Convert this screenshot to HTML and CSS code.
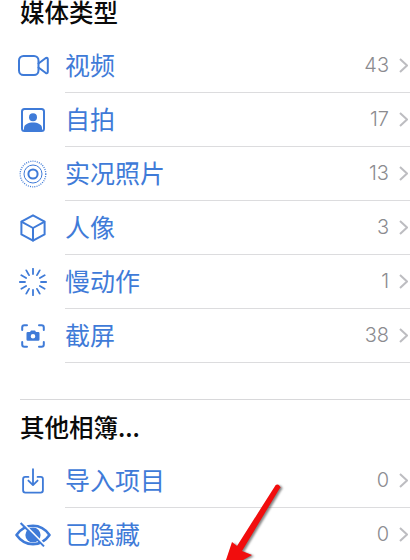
FILE: index.html
```html
<!DOCTYPE html>
<html lang="zh-CN">
<head>
<meta charset="utf-8">
<title>相簿</title>
<link rel="stylesheet" href="styles.css">
</head>
<body>
<main class="page">
  <h2 class="title first">媒体类型</h2>
  <ul class="list">
    <li class="row"><span class="icon"><svg viewBox="0 0 31 21" width="31" height="21"><rect x="1" y="1" width="19.5" height="19" rx="4.5" class="s"/><path d="M20.5 8.5 27.5 3.2Q29.8 2 29.8 4.2V16.8Q29.8 19 27.5 17.8L20.5 12.5" class="s"/></svg></span><span class="body"><span class="name">视频</span><span class="num">43</span><svg class="chev" viewBox="0 0 9 15" width="9" height="15"><path d="M1 1 8 7.5 1 14"/></svg></span></li>
    <li class="row"><span class="icon"><svg viewBox="0 0 24 24" width="24" height="24"><rect x="1" y="1" width="22" height="22" rx="2.5" class="s"/><circle cx="12" cy="9.2" r="4" class="f"/><path d="M3 22V20C3 16.5 7.5 14.6 12 14.6S21 16.5 21 20V22Z" class="f"/></svg></span><span class="body"><span class="name">自拍</span><span class="num">17</span><svg class="chev" viewBox="0 0 9 15" width="9" height="15"><path d="M1 1 8 7.5 1 14"/></svg></span></li>
    <li class="row"><span class="icon"><svg viewBox="0 0 28 28" width="28" height="28"><circle cx="14" cy="14" r="12.8" class="d"/><circle cx="14" cy="14" r="9" class="thin"/><circle cx="14" cy="14" r="4.6" class="s"/></svg></span><span class="body"><span class="name">实况照片</span><span class="num">13</span><svg class="chev" viewBox="0 0 9 15" width="9" height="15"><path d="M1 1 8 7.5 1 14"/></svg></span></li>
    <li class="row"><span class="icon"><svg viewBox="0 0 26 28" width="26" height="28"><path d="M13 1.3 24.6 7.6V20.4L13 26.7 1.4 20.4V7.6Z" class="s"/><path d="M1.8 7.8 13 14 24.2 7.8M13 14V26.4" class="s"/></svg></span><span class="body"><span class="name">人像</span><span class="num">3</span><svg class="chev" viewBox="0 0 9 15" width="9" height="15"><path d="M1 1 8 7.5 1 14"/></svg></span></li>
    <li class="row"><span class="icon"><svg viewBox="0 0 28 28" width="28" height="28"><path class="t" d="M14 .8V6M14 22V27.2M.8 14H6M22 14H27.2M18 7.1 20.7 2.4M7.3 25.6 10 20.9M10 7.1 7.3 2.4M20.7 25.6 18 20.9M7.1 10 2.4 7.3M25.6 20.7 20.9 18M7.1 18 2.4 20.7M25.6 7.3 20.9 10"/></svg></span><span class="body"><span class="name">慢动作</span><span class="num">1</span><svg class="chev" viewBox="0 0 9 15" width="9" height="15"><path d="M1 1 8 7.5 1 14"/></svg></span></li>
    <li class="row"><span class="icon"><svg viewBox="0 0 24 24" width="24" height="24"><path class="s" d="M6 1.2H3.4Q1.2 1.2 1.2 3.4V6M18 1.2H20.6Q22.8 1.2 22.8 3.4V6M6 22.8H3.4Q1.2 22.8 1.2 20.6V18M18 22.8H20.6Q22.8 22.8 22.8 20.6V18"/><path class="f" fill-rule="evenodd" d="M6.7 8H9L10 6.6H14L15 8H17.3Q18.5 8 18.5 9.2V15.6Q18.5 16.8 17.3 16.8H6.7Q5.5 16.8 5.5 15.6V9.2Q5.5 8 6.7 8ZM12 10A2.3 2.3 0 1 0 12 14.6 2.3 2.3 0 1 0 12 10Z"/></svg></span><span class="body"><span class="name">截屏</span><span class="num">38</span><svg class="chev" viewBox="0 0 9 15" width="9" height="15"><path d="M1 1 8 7.5 1 14"/></svg></span></li>
  </ul>
  <hr class="rule">
  <h2 class="title">其他相簿...</h2>
  <ul class="list">
    <li class="row"><span class="icon"><svg viewBox="0 0 24 28" width="22" height="26"><path class="s" d="M7 9.5H3.6Q1.2 9.5 1.2 12V24Q1.2 26.6 3.6 26.6H20.4Q22.8 26.6 22.8 24V12Q22.8 9.5 20.4 9.5H17"/><path class="s" d="M12 1.2V18M7 13.5 12 18.5 17 13.5"/></svg></span><span class="body"><span class="name">导入项目</span><span class="num">0</span><svg class="chev" viewBox="0 0 9 15" width="9" height="15"><path d="M1 1 8 7.5 1 14"/></svg></span></li>
    <li class="row"><span class="icon"><svg viewBox="0 0 36 26" width="36" height="26"><path class="eye" d="M1.5 13C6 6.6 11.5 3.8 18 3.8S30 6.6 34.5 13C30 19.4 24.5 22.2 18 22.2S6 19.4 1.5 13Z"/><circle cx="18" cy="13" r="7.6" class="f"/><path class="w" d="M7.2 .4 30.4 23.6"/><path class="b" d="M5.6 1 29 24.4"/></svg></span><span class="body"><span class="name">已隐藏</span><span class="num">0</span><svg class="chev" viewBox="0 0 9 15" width="9" height="15"><path d="M1 1 8 7.5 1 14"/></svg></span></li>
  </ul>
  <svg class="arrow" viewBox="0 0 70 80" width="70" height="80"><path class="red" d="M55.7 4.9Q58 4 59.7 6T59.6 8.5L22 71 32 75 2 92 12 62 17 66Z"/></svg>
</main>
</body>
</html>
```
FILE: styles.css
```css
* { box-sizing: border-box; }
html, body { margin: 0; padding: 0; background: #fff; }
.page {
  position: relative;
  width: 410px;
  height: 560px;
  overflow: hidden;
  font-family: "Noto Sans CJK SC", "Noto Sans", sans-serif;
}
.title {
  margin: 0;
  height: 54px;
  padding: 0 0 2px 20px;
  display: flex;
  align-items: center;
  font-size: 24.5px;
  font-weight: 500;
  color: #0a0a0a;
}
.title.first { height: 24px; margin-bottom: 15px; }
.list { list-style: none; margin: 0; padding: 0; }
.row { display: flex; height: 54px; }
.icon {
  flex: 0 0 65px;
  display: flex;
  align-items: center;
  justify-content: center;
  padding-left: 1px;
  padding-bottom: 1px;
}
.icon svg { display: block; flex: none; }
.body {
  flex: 1;
  display: flex;
  align-items: center;
  padding-bottom: 1px;
  border-bottom: 1px solid #dcdcde;
}
.name { flex: 1; font-size: 25px; color: #3f7bd8; font-weight: 400; margin-bottom: 2px; }
.num { font-family: Inter, "Liberation Sans", sans-serif; font-size: 20px; font-weight: 300; color: #8b8b8f; margin-right: 10px; }
.chev { display: block; margin-right: 2px; }
.chev path { fill: none; stroke: #bdbdc1; stroke-width: 2; }
.rule { margin: 36px 0 0 20px; height: 1px; border: 0; background: #d8d8da; }
.s { fill: none; stroke: #3f7bd8; stroke-width: 2; stroke-linejoin: round; stroke-linecap: round; }
.f { fill: #3f7bd8; }
.d { fill: none; stroke: #3f7bd8; stroke-width: 1.3; stroke-dasharray: 1 1.2; }
.thin { fill: none; stroke: #3f7bd8; stroke-width: 1; }
.t { fill: none; stroke: #3f7bd8; stroke-width: 1.8; stroke-linecap: round; }
.eye { fill: none; stroke: #3f7bd8; stroke-width: 2.6; stroke-linejoin: round; }
.w { fill: none; stroke: #fff; stroke-width: 2; }
.b { fill: none; stroke: #3f7bd8; stroke-width: 2; }
.arrow { position: absolute; left: 220px; top: 480px; overflow: hidden; filter: drop-shadow(2px 1px 1px rgba(50, 50, 50, .6)); }
.red { fill: #f10d0d; }
```
